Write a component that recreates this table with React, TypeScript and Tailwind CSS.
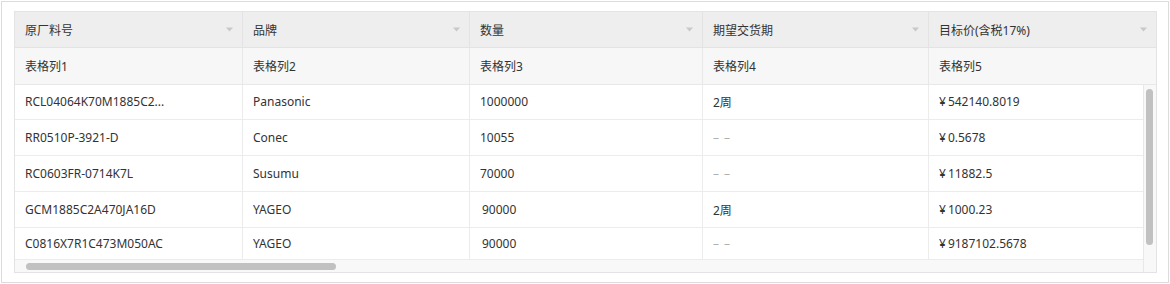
import React from "react";

const font = { fontFamily: '"Noto Sans", "Noto Sans CJK SC", sans-serif' };

const headers = ["原厂料号", "品牌", "数量", "期望交货期", "目标价(含税17%)"];
const filters = ["表格列1", "表格列2", "表格列3", "表格列4", "表格列5"];

type Row = { c: string[]; h: string; pad3?: boolean };
const rows: Row[] = [
  { c: ["RCL04064K70M1885C2...", "Panasonic", "1000000", "2周", "¥542140.8019"], h: "h-[35px]" },
  { c: ["RR0510P-3921-D", "Conec", "10055", "-", "¥0.5678"], h: "h-[36px]" },
  { c: ["RC0603FR-0714K7L", "Susumu", "70000", "-", "¥11882.5"], h: "h-[36px]" },
  { c: ["GCM1885C2A470JA16D", "YAGEO", "90000", "2周", "¥1000.23"], h: "h-[36px]", pad3: true },
  { c: ["C0816X7R1C473M050AC", "YAGEO", "90000", "-", "¥9187102.5678"], h: "h-[32px]", pad3: true },
];

function Tri() {
  return (
    <svg width="7" height="5" viewBox="0 0 7 5" className="shrink-0">
      <path d="M0 0.5 L7 0.5 L3.5 4.5 Z" fill="#c8c8c8" />
    </svg>
  );
}

function Dash() {
  return <span className="text-[#b0b0b0] tracking-[1px]">– –</span>;
}

function Cell({ c, i }: { c: string; i: number }) {
  if (c === "-") return <Dash />;
  if (i === 3) return <span className="pt-[2px]">{c}</span>;
  if (i === 4 && c.startsWith("¥"))
    return (
      <span>
        <span className="mr-[2px]">¥</span>
        {c.slice(1)}
      </span>
    );
  return <span>{c}</span>;
}

export default function App() {
  return (
    <div className="w-[1170px] h-[284px] bg-white p-px text-[12px] text-[#333]" style={font}>
      <div className="w-[1168px] h-[282px] border border-[#dcdcdc] pl-[12px] pt-[9px]">
        <div className="w-[1143px] h-[262px] border border-[#e3e3e3] flex flex-col">
          {/* header */}
          <div className="flex h-[36px] border-b border-[#e3e3e3] bg-[#eeeeee] shrink-0">
            {headers.map((h, i) => (
              <div
                key={i}
                className={`flex items-center justify-between pl-[10px] pr-[9px] ${
                  i === 0 ? "w-[228px] border-r border-[#e3e3e3]" : i === 1 ? "w-[227px] border-r border-[#e3e3e3]" : i === 2 ? "w-[233px] border-r border-[#e3e3e3]" : i === 3 ? "w-[226px] border-r border-[#e3e3e3]" : "flex-1"
                }`}
              >
                <span className="pt-[3px]">{h}</span>
                <Tri />
              </div>
            ))}
          </div>
          {/* filter row */}
          <div className="flex h-[37px] border-b border-[#e8e8e8] bg-[#f7f7f7] shrink-0">
            {filters.map((f, i) => (
              <div
                key={i}
                className={`flex items-center pl-[10px] ${
                  i === 0 ? "w-[228px] border-r border-[#e8e8e8]" : i === 1 ? "w-[227px] border-r border-[#e8e8e8]" : i === 2 ? "w-[233px] border-r border-[#e8e8e8]" : i === 3 ? "w-[226px] border-r border-[#e8e8e8]" : "flex-1"
                }`}
              >
                <span className="pt-[1px]">{f}</span>
              </div>
            ))}
          </div>
          {/* body */}
          <div className="flex flex-1 min-h-0">
            <div className="flex flex-col w-[1128px]">
              {rows.map((r, ri) => (
                <div key={ri} className={`flex ${r.h} border-b border-[#ececec] shrink-0`}>
                  {r.c.map((c, i) => (
                    <div
                      key={i}
                      className={`flex items-center ${i === 2 && r.pad3 ? "pl-[12px]" : "pl-[10px]"} ${
                        i === 0 ? "w-[228px] border-r border-[#ececec]" : i === 1 ? "w-[227px] border-r border-[#ececec]" : i === 2 ? "w-[233px] border-r border-[#ececec]" : i === 3 ? "w-[226px] border-r border-[#ececec]" : "flex-1"
                      }`}
                    >
                      <Cell c={c} i={i} />
                    </div>
                  ))}
                </div>
              ))}
              {/* horizontal scrollbar */}
              <div className="flex-1 bg-[#f8f8f8] pt-[3px] pl-[11px]">
                <div className="w-[310px] h-[7px] rounded-full bg-[#c1c1c1]" />
              </div>
            </div>
            {/* vertical scrollbar */}
            <div className="w-[13px] border-l border-[#e8e8e8] bg-[#f8f8f8] pt-[4px] pl-[2px]">
              <div className="w-[7px] h-[156px] rounded-full bg-[#c1c1c1]" />
            </div>
          </div>
        </div>
      </div>
    </div>
  );
}
